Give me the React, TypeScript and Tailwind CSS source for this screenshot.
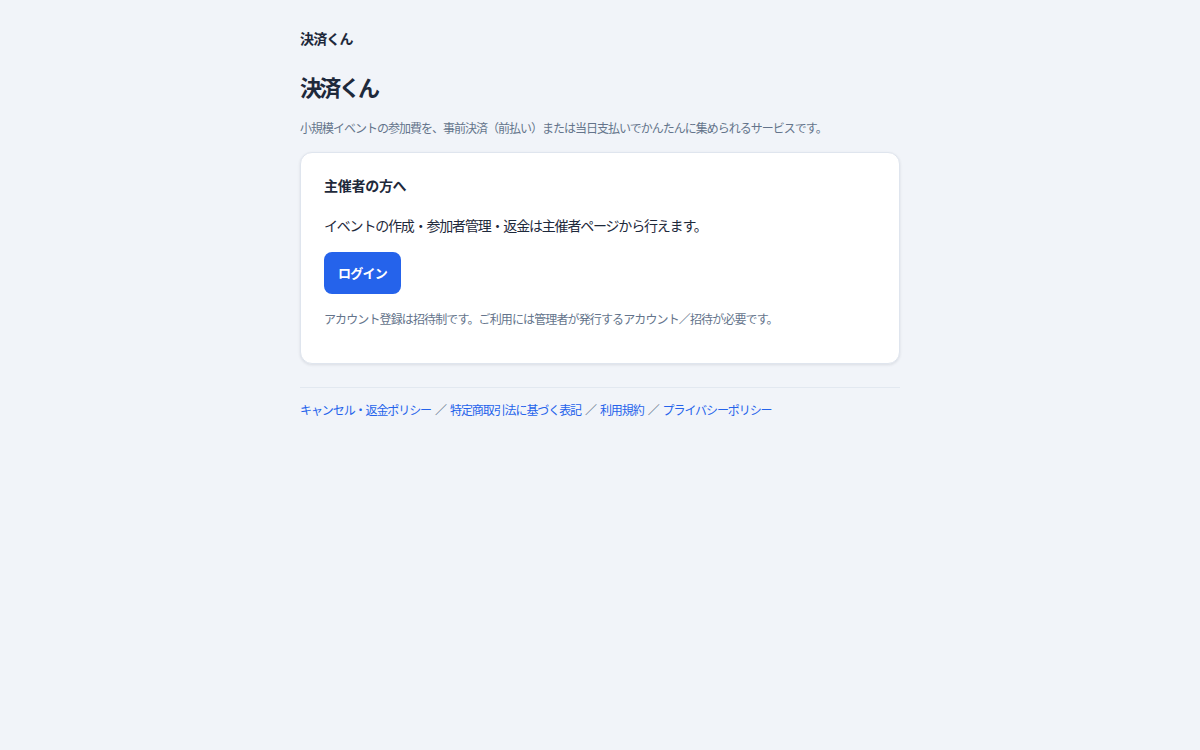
import React from 'react'

const FONT = { fontFamily: '"Noto Sans CJK JP", "Noto Sans", sans-serif' }

const LINKS = ['キャンセル・返金ポリシー', '特定商取引法に基づく表記', '利用規約', 'プライバシーポリシー']

export default function App() {
  return (
    <div className="min-h-[750px] bg-[#f1f4f9] text-[#1e293b]" style={FONT}>
      <div className="mx-auto w-[600px] pt-7">
        <header className="text-[14px] font-bold leading-5 tracking-[-0.06em]">決済くん</header>

        <h1 className="mt-[23px] text-[22px] font-bold leading-[30px] tracking-[-0.12em]">決済くん</h1>
        <p className="mt-[18px] text-[12px] leading-[18px] tracking-[-0.083em] text-[#64748b]">
          小規模イベントの参加費を、事前決済（前払い）または当日支払いでかんたんに集められるサービスです。
        </p>

        <section className="mt-[15px] rounded-xl border border-[#dfe5ee] bg-white px-[23px] pb-[35px] pt-[21px] shadow-[0_1px_3px_rgba(15,23,42,0.1)]">
          <h2 className="text-[14px] font-bold leading-[22px] tracking-[-0.02em]">主催者の方へ</h2>
          <p className="mt-[18px] text-[14px] leading-[22px] tracking-[-0.085em]">
            イベントの作成・参加者管理・返金は主催者ページから行えます。
          </p>
          <button className="mt-4 flex h-[42px] w-[77px] items-center justify-center rounded-lg bg-[#2563eb] text-[13px] font-bold tracking-[-0.06em] text-white">
            ログイン
          </button>
          <p className="mt-4 text-[12px] leading-[18px] tracking-[-0.073em] text-[#64748b]">
            アカウント登録は招待制です。ご利用には管理者が発行するアカウント／招待が必要です。
          </p>
        </section>

        <div className="mt-[23px] border-t border-[#e2e8f0]" />
        <footer className="mt-[13px] flex items-center text-[12px] leading-[18px] tracking-[-0.09em] text-[#2563eb]">
          {LINKS.map((l, i) => (
            <React.Fragment key={l}>
              {i > 0 && <span className="mx-[4px] text-[#64748b]">／</span>}
              <a href="#">{l}</a>
            </React.Fragment>
          ))}
        </footer>
      </div>
    </div>
  )
}
